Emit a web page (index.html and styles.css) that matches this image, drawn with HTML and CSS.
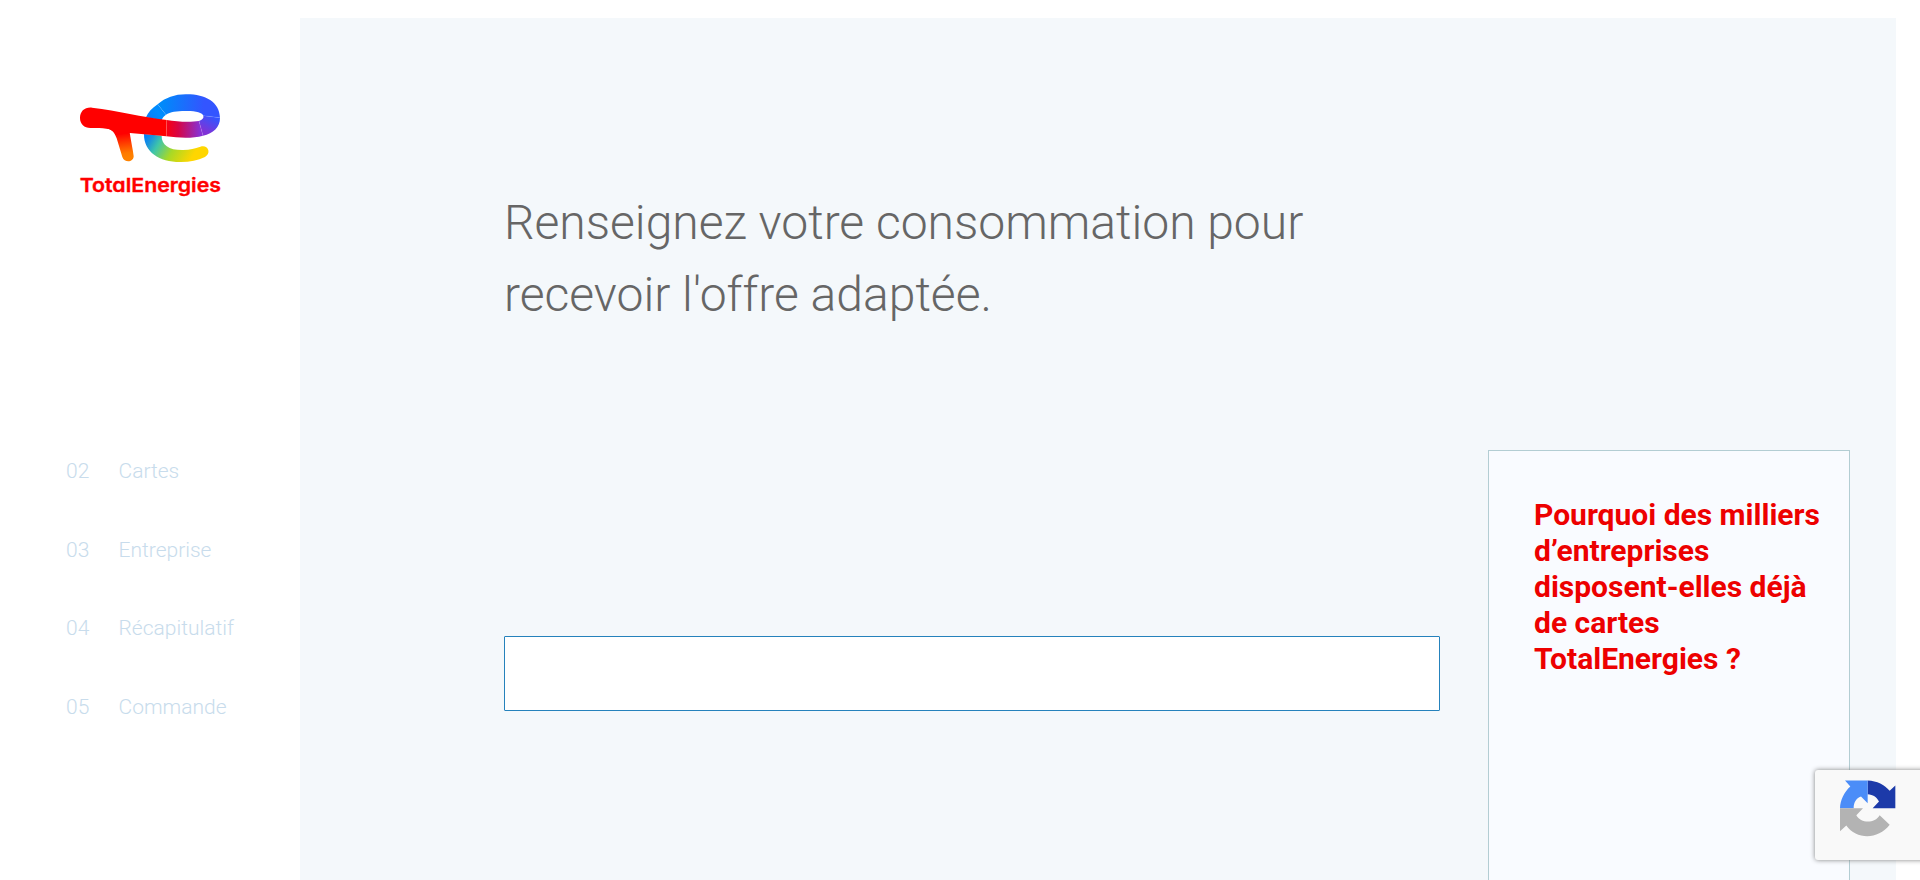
FILE: index.html
```html
<!DOCTYPE html>
<html lang="fr">
<head>
<meta charset="utf-8">
<title>TotalEnergies</title>
<link rel="stylesheet" href="styles.css">
</head>
<body>
<div class="page">
  <aside class="sidebar">
    <svg class="logo" viewBox="0 0 480 360" role="img" aria-label="TotalEnergies">
      <defs>
        <linearGradient id="loopLeft" gradientUnits="userSpaceOnUse" x1="230" y1="100" x2="280" y2="60"><stop offset="0" stop-color="#0a7df5"/><stop offset=".6" stop-color="#008cff"/><stop offset="1" stop-color="#0088fa"/></linearGradient>
        <linearGradient id="loopTop" gradientUnits="userSpaceOnUse" x1="275" y1="70" x2="400" y2="80"><stop offset="0" stop-color="#008afa"/><stop offset="1" stop-color="#3355ff"/></linearGradient>
        <linearGradient id="loopRight" gradientUnits="userSpaceOnUse" x1="430" y1="95" x2="405" y2="140"><stop offset="0" stop-color="#3355ff"/><stop offset="1" stop-color="#8033d6"/></linearGradient>
        <linearGradient id="bar" gradientUnits="userSpaceOnUse" x1="290" y1="0" x2="390" y2="0"><stop offset="0" stop-color="#fa0010"/><stop offset=".35" stop-color="#d60646"/><stop offset="1" stop-color="#8830d4"/></linearGradient>
        <linearGradient id="stem" gradientUnits="userSpaceOnUse" x1="165" y1="145" x2="173" y2="218"><stop offset="0" stop-color="#ff0000"/><stop offset=".8" stop-color="#ff7a00"/><stop offset="1" stop-color="#ff8200"/></linearGradient>
        <linearGradient id="tail" gradientUnits="userSpaceOnUse" x1="228" y1="150" x2="360" y2="228"><stop offset="0" stop-color="#0080fa"/><stop offset=".12" stop-color="#1b92dc"/><stop offset=".3" stop-color="#40c6a8"/><stop offset=".6" stop-color="#a8d926"/><stop offset="1" stop-color="#ffd600"/></linearGradient>
      </defs>
      <path fill="url(#loopLeft)" d="M228 97C234 82 246 69 263 58L288 89C281 94 277 99 275 106Z"/>
      <path fill="url(#loopTop)" d="M263 58C286 38 315 28 347 28C405 27 448 50 450 98L400 92C398 82 374 77 345 78C321 78 300 81 288 89Z"/>
      <path fill="url(#loopRight)" d="M400 92L450 98C450 127 430 145 399 152L387 108C397 104 402 99 400 92Z"/>
      <path fill="url(#bar)" d="M290 105C324 111 363 112 387 108L399 152C368 161 327 159 289 154Z"/>
      <path fill="url(#tail)" d="M222 147C221 202 270 232 333 231C361 231 383 226 405 216C413 211 417 204 415 196C412 185 402 181 391 185C375 190 360 195 340 195C298 196 274 180 275 152Z"/>
      <path fill="url(#stem)" d="M109 130C128 134 134 145 140 160L157 216C163 234 190 233 191 214C190 201 184 174 179 142L150 120Z"/>
      <path fill="#f00" d="M66 68C44 66 30 79 30 99C30 117 43 129 61 129C82 129 95 129 109 131C127 133 135 141 139 150L180 144L289 154L290 105C215 96 145 77 66 68Z"/>
      <path class="seam" d="M263 58L288 89M400 92L450 98M387 108L399 152M290 105L289 154"/>
      <text class="wordmark" x="29" y="320" textLength="424" lengthAdjust="spacingAndGlyphs">TotalEnergies</text>
    </svg>
    <ul class="steps">
      <li class="step"><span class="step-number">02</span><span>Cartes</span></li>
      <li class="step"><span class="step-number">03</span><span>Entreprise</span></li>
      <li class="step"><span class="step-number">04</span><span>Récapitulatif</span></li>
      <li class="step"><span class="step-number">05</span><span>Commande</span></li>
    </ul>
  </aside>
  <main class="main">
    <section class="form">
      <h1 class="title">Renseignez votre consommation pour recevoir l'offre adaptée.</h1>
      <input class="field" type="text" aria-label="Consommation">
    </section>
    <aside class="panel">
      <h2 class="panel-title">Pourquoi des milliers d’entreprises disposent-elles déjà de cartes TotalEnergies ?</h2>
    </aside>
  </main>
</div>
<div class="captcha">
  <svg class="captcha-icon" viewBox="0 0 168 170" aria-hidden="true">
    <path fill="#1c3aa9" d="M83 1C111 2 134 14 149 32L166 16V84H98L117 64C110 50 99 43 83 42Z"/>
    <path fill="#4b8df8" d="M83 1V69L63 49C48 55 41 67 41 84H0C1 59 13 35 31 19L15 1Z"/>
    <path fill="#b3b3b3" d="M0 84H69L49 105C62 130 104 131 119 105L149 134C114 180 49 179 19 136L0 153Z"/>
  </svg>
</div>
</body>
</html>
```
FILE: styles.css
```css
* { box-sizing: border-box; }
body { margin: 0; background: #fff; font-family: Roboto, sans-serif; overflow: hidden; }
.page { display: flex; height: 880px; overflow: hidden; }
.sidebar { width: 300px; flex: none; padding-top: 85px; }
.logo { display: block; width: 160px; height: 120px; margin-left: 70px; }
.seam { fill: none; stroke: #fff; stroke-opacity: .25; stroke-width: 1.2; }
.wordmark { font: 600 58px Inter, sans-serif; font-feature-settings: "cv11"; fill: #f00; stroke: #f00; stroke-width: 1; }
.steps { list-style: none; margin: 227px 0 0; padding: 0 0 0 66px; }
.step { display: flex; height: 78.6px; line-height: 79px; font-size: 21px; font-weight: 300; color: #c8dcec; }
.step-number { width: 52.5px; }
.main { flex: 1; display: flex; align-items: flex-start; margin: 18px 24px 0 0; padding-left: 204px; height: 862px; background: #f4f8fb; overflow: hidden; }
.form { width: 936px; padding-top: 169px; }
.title { margin: 0 0 305px; width: 840px; font-size: 48px; line-height: 72px; font-weight: 300; color: #666; }
.field { display: block; width: 936px; height: 75px; border: 1px solid #2582bc; border-radius: 1px; background: #fff; padding: 0 20px; font: inherit; outline: none; }
.panel { width: 362px; height: 500px; margin: 432px 0 0 48px; padding: 46px 20px 0 45px; border: 1px solid #b3cdd3; background: #f9fbff; }
.panel-title { margin: 0; font-size: 30px; line-height: 36px; font-weight: 700; color: #ed0000; }
.captcha { position: fixed; left: 1815px; top: 770px; width: 256px; height: 90px; padding: 10px 0 0 25px; background: #f9f9f9; border-radius: 3px; box-shadow: 0 0 5px gray; }
.captcha-icon { display: block; width: 56px; height: 57px; }
```
